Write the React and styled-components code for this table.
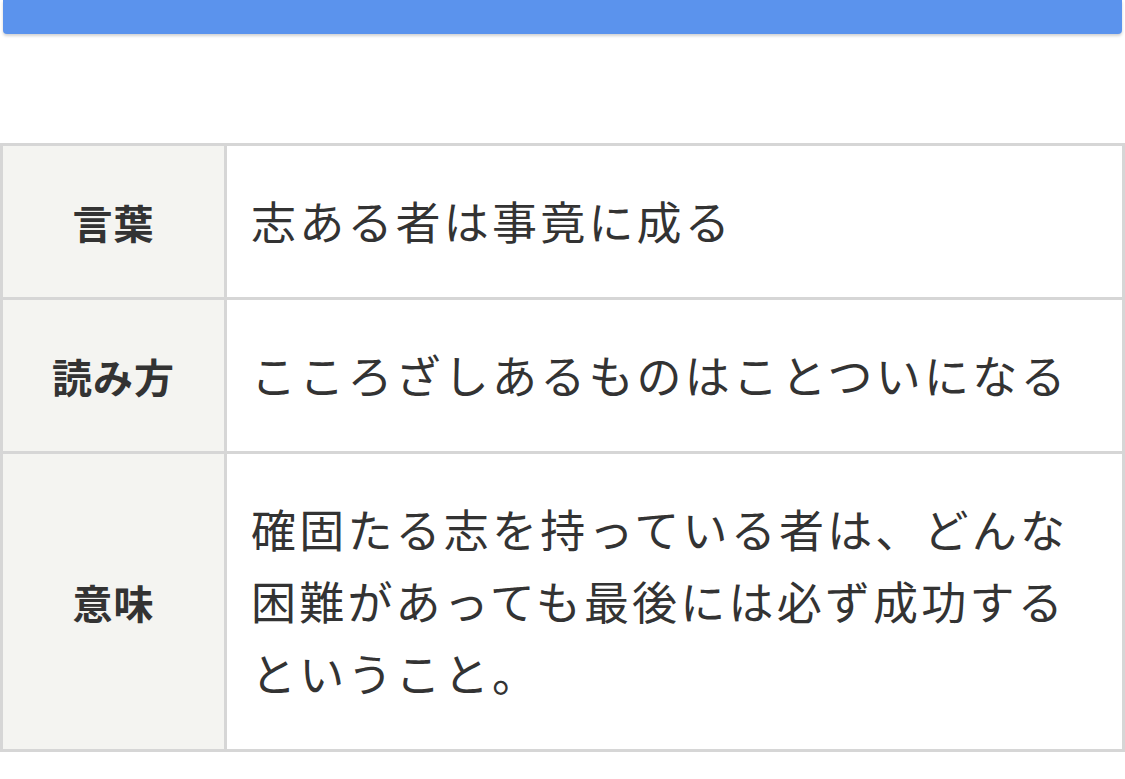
import React from 'react';
import styled, { createGlobalStyle } from 'styled-components';

const COLORS = {
  blue: '#5b93ed',
  border: '#d6d6d6',
  headBg: '#f4f4f1',
  text: '#333333',
  white: '#ffffff',
};

const GlobalStyle = createGlobalStyle`
  body {
    margin: 0;
    background: ${COLORS.white};
    font-family: "Noto Sans CJK JP", "Noto Sans", sans-serif;
    color: ${COLORS.text};
  }
`;

const Page = styled.div`
  display: flex;
  flex-direction: column;
`;

const TopBar = styled.div`
  height: 34px;
  margin: 0 3px;
  background: ${COLORS.blue};
  border-radius: 0 0 4px 4px;
  box-shadow: 0 2px 3px rgba(0, 0, 0, 0.18);
`;

const Table = styled.div`
  margin-top: 109px;
  display: grid;
  grid-template-columns: 224px 1fr;
  border-top: 3px solid ${COLORS.border};
  border-left: 3px solid ${COLORS.border};
`;

const Head = styled.div`
  display: flex;
  align-items: center;
  justify-content: center;
  background: ${COLORS.headBg};
  border-right: 3px solid ${COLORS.border};
  border-bottom: 3px solid ${COLORS.border};
  font-size: 40px;
  font-weight: 700;
  letter-spacing: 1px;
  color: ${COLORS.text};
`;

const Value = styled.div`
  padding: 39px 24px 40px;
  border-right: 3px solid ${COLORS.border};
  border-bottom: 3px solid ${COLORS.border};
  font-size: 45px;
  line-height: 72px;
  letter-spacing: 3.2px;
  color: ${COLORS.text};
`;

const rows = [
  { label: '言葉', value: '志ある者は事竟に成る' },
  { label: '読み方', value: 'こころざしあるものはことついになる' },
  {
    label: '意味',
    value: '確固たる志を持っている者は、どんな困難があっても最後には必ず成功するということ。',
  },
];

const App = () => {
  return (
    <Page>
      <GlobalStyle />
      <TopBar />
      <Table>
        {rows.map((row) => (
          <React.Fragment key={row.label}>
            <Head>{row.label}</Head>
            <Value>{row.value}</Value>
          </React.Fragment>
        ))}
      </Table>
    </Page>
  );
};

export default App;
